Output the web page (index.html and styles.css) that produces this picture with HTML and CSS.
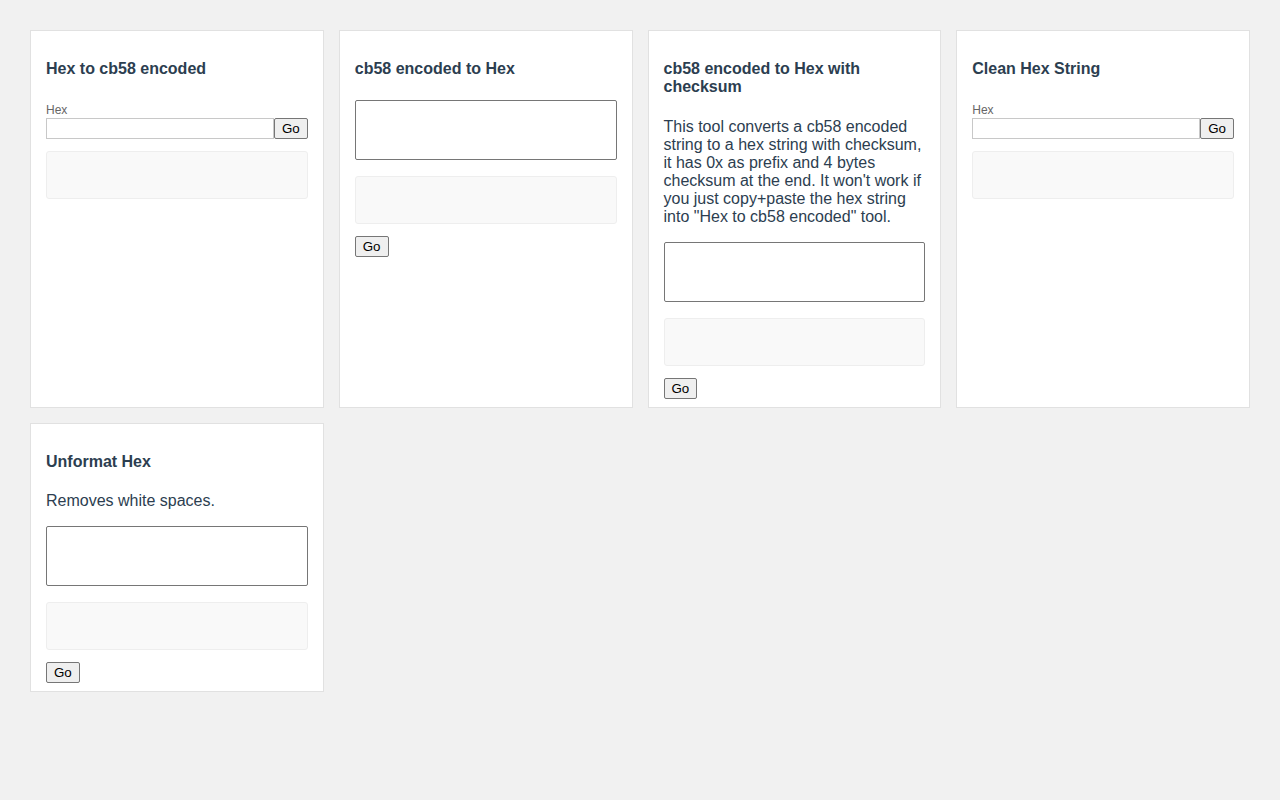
FILE: index.html
```html
<!DOCTYPE html>
<html>
<head>
<meta charset="utf-8">
<title>cb58 tools</title>
<link rel="stylesheet" href="styles.css">
</head>
<body>
<div class="grid">
  <div class="card">
    <h3 class="title">Hex to cb58 encoded</h3>
    <label class="label">Hex</label>
    <div class="input-row">
      <input class="text-input" type="text">
      <button class="btn">Go</button>
    </div>
    <div class="output"></div>
  </div>
  <div class="card">
    <h3 class="title">cb58 encoded to Hex</h3>
    <textarea class="area"></textarea>
    <div class="output"></div>
    <button class="btn">Go</button>
  </div>
  <div class="card">
    <h3 class="title">cb58 encoded to Hex with checksum</h3>
    <p class="desc">This tool converts a cb58 encoded string to a hex string with checksum, it has 0x as prefix and 4 bytes checksum at the end. It won't work if you just copy+paste the hex string into "Hex to cb58 encoded" tool.</p>
    <textarea class="area"></textarea>
    <div class="output"></div>
    <button class="btn">Go</button>
  </div>
  <div class="card">
    <h3 class="title">Clean Hex String</h3>
    <label class="label">Hex</label>
    <div class="input-row">
      <input class="text-input" type="text">
      <button class="btn">Go</button>
    </div>
    <div class="output"></div>
  </div>
  <div class="card">
    <h3 class="title">Unformat Hex</h3>
    <p class="desc">Removes white spaces.</p>
    <textarea class="area"></textarea>
    <div class="output"></div>
    <button class="btn">Go</button>
  </div>
</div>
</body>
</html>
```

FILE: styles.css
```css
html, body {
  margin: 0;
  padding: 0;
  background: #f1f1f1;
  font-family: "Liberation Sans", Arial, sans-serif;
  color: #2c3e50;
}
.grid {
  padding: 30px;
  display: grid;
  grid-template-columns: repeat(4, 1fr);
  gap: 15px;
  align-items: start;
}
.grid > .card:nth-child(-n+4) {
  align-self: stretch;
}
.card {
  background: #fff;
  border: 1px solid #e1e1e1;
  padding: 15px 15px 8px;
  display: flex;
  flex-direction: column;
  align-items: flex-start;
}
.title {
  font-size: 16px;
  line-height: 18px;
  font-weight: bold;
  margin: 14px 0 21.5px;
  color: #2c3e50;
}
.desc {
  font-size: 16px;
  line-height: 18px;
  margin: 0 0 16px;
}
.label {
  display: block;
  font-size: 12px;
  line-height: 15px;
  color: #666;
  margin-top: 3px;
}
.input-row {
  display: flex;
  width: 100%;
  margin-bottom: 12px;
}
.text-input {
  flex: 1;
  min-width: 0;
  height: 21px;
  box-sizing: border-box;
  border: 1px solid #c8c8c8;
  padding: 1px 2px;
  margin: 0;
  font-family: "Liberation Sans", Arial, sans-serif;
  font-size: 13px;
}
.btn {
  height: 21px;
  box-sizing: border-box;
  padding: 1px 7px;
  margin: 0;
  font-family: "Liberation Sans", Arial, sans-serif;
  font-size: 13.33px;
  color: #000;
  background: #efefef;
  border: 1px solid #767676;
  border-radius: 2px;
}
.area {
  display: block;
  width: 100%;
  height: 60px;
  box-sizing: border-box;
  border: 1px solid #767676;
  border-radius: 2px;
  margin: 0 0 16px;
  resize: none;
}
.output {
  width: 100%;
  height: 48px;
  box-sizing: border-box;
  background: #f9f9f9;
  border: 1px solid #eee;
  border-radius: 3px;
  margin-bottom: 12px;
}
```
